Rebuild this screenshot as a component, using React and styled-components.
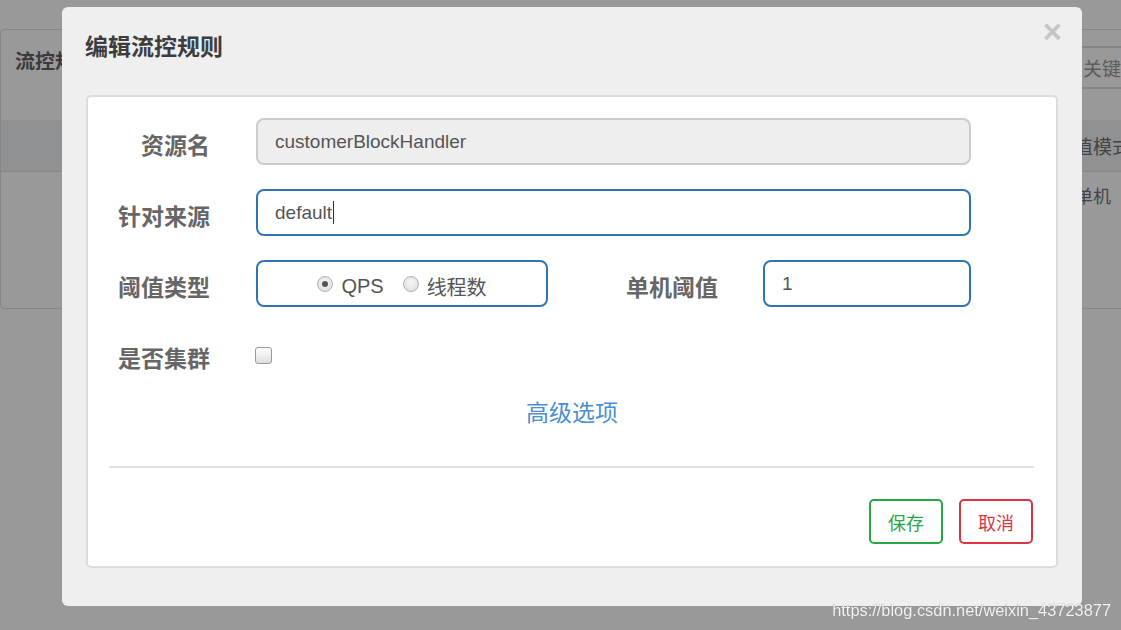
import React from "react";
import styled, { createGlobalStyle } from "styled-components";

const Global = createGlobalStyle`
  html, body { margin: 0; padding: 0; }
  body {
    background: #999999;
    overflow: hidden;
    width: 1121px;
    height: 630px;
    font-family: "Noto Sans CJK SC", "Liberation Sans", sans-serif;
  }
`;

const Page = styled.div`
  padding-top: 29px;
  width: 1121px;
  height: 630px;
  box-sizing: border-box;
  overflow: hidden;
`;

const Panel = styled.div`
  width: 1200px;
  height: 280px;
  box-sizing: border-box;
  border: 1px solid #858585;
  border-radius: 4px;
`;

const PanelHeader = styled.div`
  height: 90px;
  display: flex;
  align-items: flex-start;
  padding: 0 5px 0 14px;
`;

const PanelTitle = styled.div`
  margin-top: 16px;
  font-size: 20px;
  font-weight: 700;
  color: #3a3a3a;
`;

const Search = styled.div`
  margin-left: auto;
  margin-top: 16px;
  width: 125px;
  height: 43px;
  box-sizing: border-box;
  border-top: 2px solid #858585;
  border-bottom: 2px solid #858585;
  display: flex;
  align-items: center;
  padding-left: 14px;
  font-size: 19px;
  color: #5c5c5c;
  white-space: nowrap;
`;

const TableRow = styled.div`
  display: grid;
  grid-template-columns: 1fr 76px 68px;
  height: ${(p) => p.$h}px;
  align-items: center;
  background: ${(p) => (p.$head ? "#909193" : "transparent")};
  border-bottom: ${(p) => (p.$head ? "1px solid #858585" : "none")};
`;

const Cell = styled.div`
  grid-column: 2;
  text-align: center;
  font-size: ${(p) => p.$size}px;
  color: #444;
  white-space: nowrap;
`;

const Modal = styled.div`
  position: fixed;
  left: 62px;
  top: 7px;
  width: 1020px;
  box-sizing: border-box;
  background: #efefef;
  border-radius: 6px;
  padding: 0 24px 38px 24px;
`;

const ModalHeader = styled.div`
  height: 88px;
  display: flex;
  align-items: center;
  position: relative;
`;

const ModalTitle = styled.h3`
  margin: -12px 0 0 -1px;
  font-size: 23px;
  font-weight: 700;
  color: #3d3d3d;
`;

const Close = styled.span`
  position: absolute;
  right: -4px;
  top: 8px;
  font-family: "Liberation Sans", sans-serif;
  font-size: 33px;
  font-weight: 700;
  line-height: 1;
  color: #c6c6c6;
`;

const Card = styled.div`
  background: #fff;
  border: 2px solid #dcdcdc;
  border-radius: 5px;
  padding: 21px 0 22px 0;
`;

const Form = styled.div`
  display: flex;
  flex-direction: column;
  gap: 24px;
`;

const Row = styled.div`
  display: grid;
  grid-template-columns: 122px 715px;
  column-gap: 46px;
  align-items: center;
  min-height: 47px;
`;

const Label = styled.div`
  text-align: right;
  font-size: 23px;
  font-weight: 700;
  color: #666;
  padding-top: 4px;
  white-space: nowrap;
`;

const Field = styled.div`
  height: 47px;
  box-sizing: border-box;
  border: 2px solid ${(p) => (p.$disabled ? "#cccccc" : "#3174b5")};
  background: ${(p) => (p.$disabled ? "#eeeeee" : "#fff")};
  border-radius: 8px;
  padding: 0 17px;
  display: flex;
  align-items: center;
  font-family: "Liberation Sans", sans-serif;
  font-size: 19px;
  color: #555;
  width: ${(p) => (p.$w ? `${p.$w}px` : "auto")};
`;

const Caret = styled.span`
  display: inline-block;
  width: 1px;
  height: 23px;
  background: #333;
  margin-left: 1px;
`;

const Split = styled.div`
  display: flex;
  align-items: center;
`;

const RadioBox = styled.div`
  width: 292px;
  height: 47px;
  box-sizing: border-box;
  border: 2px solid #3174b5;
  border-radius: 8px;
  display: flex;
  align-items: center;
  justify-content: center;
  gap: 19px;
  padding-top: 5px;
`;

const RadioOpt = styled.label`
  display: flex;
  align-items: center;
  gap: 8px;
  font-family: "Liberation Sans", "Noto Sans CJK SC", sans-serif;
  font-size: 20px;
  color: #555;
`;

const RadioDot = styled.span`
  width: 16px;
  height: 16px;
  box-sizing: border-box;
  border-radius: 50%;
  border: 1px solid #b0b0b0;
  background: radial-gradient(circle at 50% 40%, #f6f6f6, #dadada);
  display: flex;
  align-items: center;
  justify-content: center;
  margin-top: -4px;
  &::after {
    content: "";
    width: 6px;
    height: 6px;
    border-radius: 50%;
    background: ${(p) => (p.$on ? "#555" : "transparent")};
  }
`;

const SideLabel = styled(Label)`
  width: 170px;
  margin-right: 45px;
  box-sizing: border-box;
`;

const Check = styled.span`
  width: 17px;
  height: 17px;
  box-sizing: border-box;
  border: 1px solid #9a9a9a;
  border-radius: 3px;
  background: linear-gradient(#ffffff, #dedede);
  margin-left: -1px;
  margin-top: 2px;
`;

const Advanced = styled.a`
  display: block;
  text-align: center;
  margin-top: 16px;
  font-size: 23px;
  color: #4a8fd1;
  text-decoration: none;
`;

const Divider = styled.hr`
  margin: 38px 22px 0 21px;
  border: none;
  border-top: 2px solid #e2e2e2;
`;

const Footer = styled.div`
  display: flex;
  justify-content: flex-end;
  gap: 16px;
  margin-top: 31px;
  padding-right: 23px;
`;

const Btn = styled.button`
  width: 74px;
  height: 45px;
  box-sizing: border-box;
  background: #fff;
  border: 2px solid ${(p) => p.$c};
  color: ${(p) => p.$c};
  border-radius: 5px;
  font-family: "Noto Sans CJK SC", sans-serif;
  font-size: 18px;
  padding: 0;
`;

const Watermark = styled.div`
  position: fixed;
  right: 10px;
  bottom: 10px;
  font-family: "Liberation Sans", sans-serif;
  font-size: 16.4px;
  color: #f4f4f4;
  text-shadow: 0 0 1px #777;
`;

export default function App() {
  return (
    <>
      <Global />
      <Page>
        <Panel>
          <PanelHeader>
            <PanelTitle>流控规则</PanelTitle>
            <Search>关键字</Search>
          </PanelHeader>
          <TableRow $head $h={51}>
            <Cell $size={19}>阈值模式</Cell>
          </TableRow>
          <TableRow $h={46}>
            <Cell $size={18}>单机</Cell>
          </TableRow>
        </Panel>
      </Page>
      <Modal>
        <ModalHeader>
          <ModalTitle>编辑流控规则</ModalTitle>
          <Close>×</Close>
        </ModalHeader>
        <Card>
          <Form>
            <Row>
              <Label>资源名</Label>
              <Field $disabled>customerBlockHandler</Field>
            </Row>
            <Row>
              <Label>针对来源</Label>
              <Field>
                default
                <Caret />
              </Field>
            </Row>
            <Row>
              <Label>阈值类型</Label>
              <Split>
                <RadioBox>
                  <RadioOpt>
                    <RadioDot $on />
                    QPS
                  </RadioOpt>
                  <RadioOpt>
                    <RadioDot />
                    线程数
                  </RadioOpt>
                </RadioBox>
                <SideLabel>单机阈值</SideLabel>
                <Field $w={208}>1</Field>
              </Split>
            </Row>
            <Row>
              <Label>是否集群</Label>
              <Split>
                <Check />
              </Split>
            </Row>
          </Form>
          <Advanced>高级选项</Advanced>
          <Divider />
          <Footer>
            <Btn $c="#28a745">保存</Btn>
            <Btn $c="#dc3545">取消</Btn>
          </Footer>
        </Card>
      </Modal>
      <Watermark>https://blog.csdn.net/weixin_43723877</Watermark>
    </>
  );
}
